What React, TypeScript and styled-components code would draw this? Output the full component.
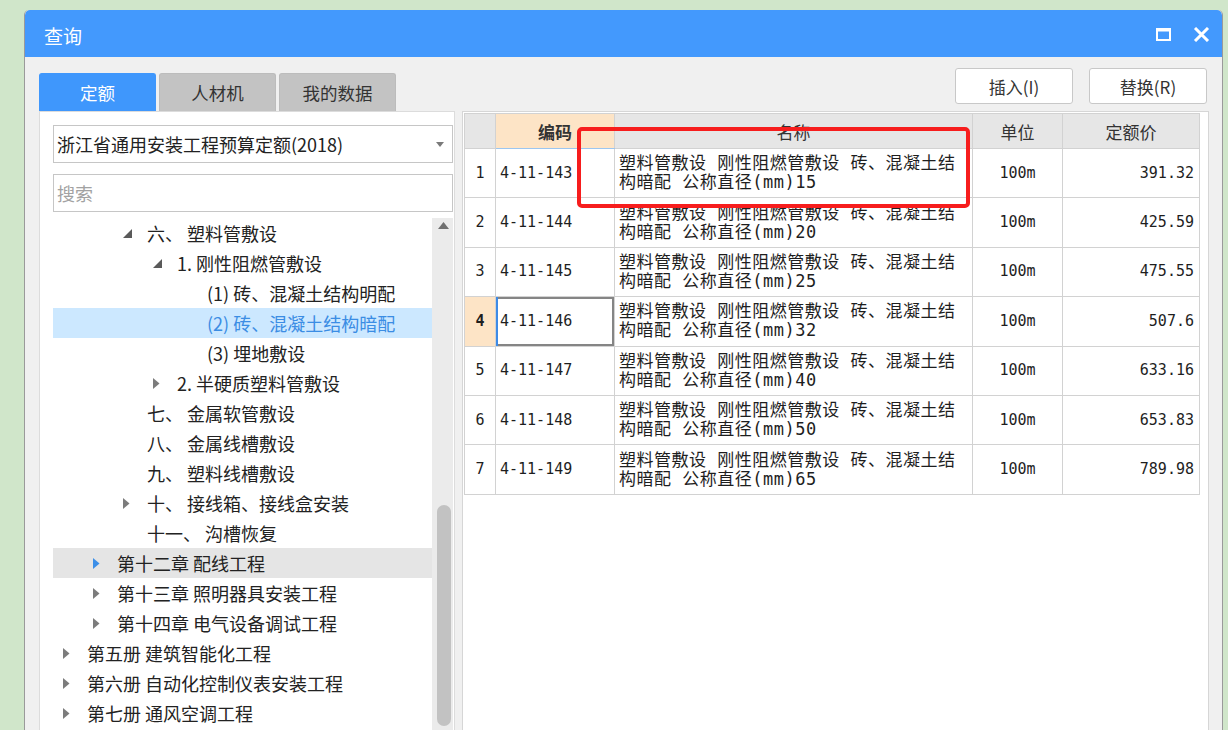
import React from "react";
import styled, { createGlobalStyle } from "styled-components";

const GlobalStyle = createGlobalStyle`
  html, body {
    margin: 0;
    padding: 0;
    height: 730px;
    overflow: hidden;
    background: #d0e6ca;
  }
  body {
    font-family: "Noto Sans CJK SC", "Noto Sans", sans-serif;
    color: #222;
  }
`;

const UI_FONT = `"Noto Sans CJK SC", "Noto Sans", sans-serif`;
const GRID_FONT = `"DejaVu Sans Mono", "Noto Sans CJK SC", monospace`;

const Page = styled.div`
  height: 730px;
  box-sizing: border-box;
  padding: 10px 0 0 24px;
  overflow: hidden;
`;

const Window = styled.div`
  width: 1199px;
  height: 760px;
  box-sizing: border-box;
  border-left: 1px solid #9a9a9a;
  border-right: 1px solid #9a9a9a;
  border-radius: 5px 5px 0 0;
  background: #f0f0f0;
  display: flex;
  flex-direction: column;
  overflow: hidden;
`;

const TitleBar = styled.div`
  height: 47px;
  flex: none;
  background: #4399fd;
  border-radius: 5px 5px 0 0;
  display: flex;
  align-items: center;
  padding: 0 12px 0 19px;
  color: #fff;
`;

const Title = styled.div`
  flex: 1;
  font-size: 19px;
  padding-top: 4px;
  font-family: ${UI_FONT};
`;

const Controls = styled.div`
  display: flex;
  align-items: center;
  gap: 22px;
  padding-top: 1px;
`;

const Body = styled.div`
  flex: 1;
  display: flex;
  flex-direction: column;
  padding: 11px 14px 0 14px;
  min-height: 0;
`;

const TopRow = styled.div`
  height: 43px;
  flex: none;
  display: flex;
  justify-content: space-between;
`;

const Tabs = styled.div`
  align-self: flex-end;
  display: flex;
  gap: 3px;
`;

const Tab = styled.div<{ $active?: boolean }>`
  width: 117px;
  height: 38px;
  box-sizing: border-box;
  border-radius: 3px 3px 0 0;
  display: flex;
  align-items: center;
  justify-content: center;
  font-size: 17.5px;
  background: ${(p) => (p.$active ? "#3f97fc" : "#c3c3c3")};
  color: ${(p) => (p.$active ? "#fff" : "#333")};
  border: 1px solid ${(p) => (p.$active ? "#3f97fc" : "#bcbcbc")};
  border-bottom: none;
`;

const Buttons = styled.div`
  display: flex;
  gap: 16px;
  margin-right: 1px;
  align-self: flex-start;
`;

const Button = styled.div`
  width: 118px;
  height: 36px;
  box-sizing: border-box;
  border: 1px solid #c8c8c8;
  border-radius: 3px;
  background: #fff;
  display: flex;
  align-items: center;
  justify-content: center;
  font-size: 17px;
  color: #333;
`;

const Main = styled.div`
  flex: 1;
  display: flex;
  gap: 7px;
  min-height: 0;
`;

const LeftPanel = styled.div`
  width: 416px;
  flex: none;
  box-sizing: border-box;
  background: #fff;
  border: 1px solid #dcdcdc;
  border-bottom: none;
  padding: 13px 1px 0 13px;
  display: flex;
  flex-direction: column;
  min-height: 0;
`;

const Select = styled.div`
  height: 38px;
  flex: none;
  box-sizing: border-box;
  border: 1px solid #c6c6c6;
  display: flex;
  align-items: center;
  padding: 0 8px 0 3px;
  font-size: 18px;
  color: #222;
`;

const SelectText = styled.span`
  flex: 1;
`;

const Search = styled.input`
  margin-top: 11px;
  height: 38px;
  flex: none;
  box-sizing: border-box;
  border: 1px solid #c6c6c6;
  outline: none;
  padding: 0 3px;
  font-size: 18px;
  font-family: ${UI_FONT};
  color: #222;
  &::placeholder {
    color: #a2a2a2;
  }
`;

const Tree = styled.div`
  margin-top: 6px;
  flex: 1;
  display: flex;
  min-height: 0;
`;

const TreeList = styled.div`
  flex: 1;
  overflow: hidden;
`;

const TreeRow = styled.div<{ $level: number; $selected?: boolean; $hot?: boolean }>`
  height: 30px;
  display: flex;
  align-items: center;
  padding-left: ${(p) => 10 + p.$level * 30}px;
  font-size: 18px;
  white-space: nowrap;
  background: ${(p) => (p.$selected ? "#cce8ff" : p.$hot ? "#e5e5e5" : "transparent")};
  color: ${(p) => (p.$selected ? "#3b8de4" : "#222")};
`;

const ArrowBox = styled.span`
  width: 24px;
  flex: none;
  display: flex;
  align-items: center;
`;

const ScrollTrack = styled.div`
  width: 21px;
  flex: none;
  background: #ebebeb;
  display: flex;
  flex-direction: column;
  align-items: center;
`;

const ScrollUp = styled.div`
  height: 11px;
  display: flex;
  align-items: flex-end;
  padding-left: 1px;
`;

const Thumb = styled.div`
  margin-top: 276px;
  width: 14px;
  height: 221px;
  border-radius: 7px;
  background: #c2c2c2;
  margin-left: 2px;
`;

const TablePanel = styled.div`
  flex: 1;
  position: relative;
  box-sizing: border-box;
  background: #fff;
  border: 1px solid #d6d6d6;
  border-bottom: none;
  padding: 1px 8px 0 1px;
`;

const Grid = styled.table`
  width: 735px;
  border-collapse: collapse;
  table-layout: fixed;
  font-family: ${GRID_FONT};
  color: #1e1e1e;
`;

const HeadCell = styled.th<{ $key?: boolean }>`
  height: 34px;
  padding: 0;
  border: 1px solid #d2d2d2;
  border-bottom: 1px solid ${(p) => (p.$key ? "#9cc6f0" : "#d2d2d2")};
  background: ${(p) => (p.$key ? "#fde4c6" : "#e6e6e6")};
  font-family: ${UI_FONT};
  font-size: 17px;
  font-weight: ${(p) => (p.$key ? 700 : 400)};
  color: #333;
  text-align: center;
`;

const Cell = styled.td<{
  $align?: "left" | "center" | "right";
  $current?: boolean;
  $focus?: boolean;
}>`
  height: 48.4px;
  padding: 0 ${(p) => (p.$align === "right" ? 5 : 4)}px 0 4px;
  border: 1px solid #d2d2d2;
  text-align: ${(p) => p.$align ?? "left"};
  font-size: 15px;
  line-height: 19px;
  vertical-align: middle;
  background: ${(p) => (p.$current ? "#fde4c6" : "#fff")};
  font-weight: ${(p) => (p.$current ? 700 : 400)};
  box-shadow: ${(p) =>
    p.$focus ? "inset 2px 0 0 #3d8ae6, inset 0 0 0 2px #858585" : "none"};
`;

const NameCell = styled(Cell)`
  font-size: 17px;
  letter-spacing: 0.5px;
  padding-right: 12px;
`;

const Annotation = styled.div`
  position: absolute;
  left: 114px;
  top: 15px;
  width: 393px;
  height: 81px;
  box-sizing: border-box;
  border: 4px solid #f71d1d;
  border-radius: 5px;
  pointer-events: none;
`;

const MaxIcon = () => (
  <svg width="15" height="13" viewBox="0 0 15 13">
    <rect x="1" y="1.5" width="13" height="10.5" fill="none" stroke="#fff" strokeWidth="2" />
    <rect x="0" y="0" width="15" height="3.5" fill="#fff" />
  </svg>
);

const CloseIcon = () => (
  <svg width="17" height="15" viewBox="0 0 17 15">
    <path d="M2 1 L15 14 M15 1 L2 14" stroke="#fff" strokeWidth="3" strokeLinecap="butt" />
  </svg>
);

const DropArrow = () => (
  <svg width="8" height="5" viewBox="0 0 8 5">
    <path d="M0 0 H8 L4 5 Z" fill="#7a7a7a" />
  </svg>
);

const Collapsed = ({ color }: { color: string }) => (
  <svg width="7" height="11" viewBox="0 0 7 11">
    <path d="M0 0 L6.5 5.5 L0 11 Z" fill={color} />
  </svg>
);

const Expanded = () => (
  <svg width="9" height="9" viewBox="0 0 9 9">
    <path d="M9 0 V9 H0 Z" fill="#5a5a5a" />
  </svg>
);

const UpArrow = () => (
  <svg width="11" height="7" viewBox="0 0 11 7">
    <path d="M0 7 L5.5 0 L11 7 Z" fill="#707070" />
  </svg>
);

type Node = {
  level: number;
  text: string;
  state?: "open" | "closed";
  selected?: boolean;
  hot?: boolean;
};

const nodes: Node[] = [
  { level: 2, text: "六、 塑料管敷设", state: "open" },
  { level: 3, text: "1. 刚性阻燃管敷设", state: "open" },
  { level: 4, text: "(1) 砖、混凝土结构明配" },
  { level: 4, text: "(2) 砖、混凝土结构暗配", selected: true },
  { level: 4, text: "(3) 埋地敷设" },
  { level: 3, text: "2. 半硬质塑料管敷设", state: "closed" },
  { level: 2, text: "七、 金属软管敷设" },
  { level: 2, text: "八、 金属线槽敷设" },
  { level: 2, text: "九、 塑料线槽敷设" },
  { level: 2, text: "十、 接线箱、接线盒安装", state: "closed" },
  { level: 2, text: "十一、 沟槽恢复" },
  { level: 1, text: "第十二章 配线工程", state: "closed", hot: true },
  { level: 1, text: "第十三章 照明器具安装工程", state: "closed" },
  { level: 1, text: "第十四章 电气设备调试工程", state: "closed" },
  { level: 0, text: "第五册 建筑智能化工程", state: "closed" },
  { level: 0, text: "第六册 自动化控制仪表安装工程", state: "closed" },
  { level: 0, text: "第七册 通风空调工程", state: "closed" },
];

const rows = [
  { code: "4-11-143", dia: "15", price: "391.32" },
  { code: "4-11-144", dia: "20", price: "425.59" },
  { code: "4-11-145", dia: "25", price: "475.55" },
  { code: "4-11-146", dia: "32", price: "507.6" },
  { code: "4-11-147", dia: "40", price: "633.16" },
  { code: "4-11-148", dia: "50", price: "653.83" },
  { code: "4-11-149", dia: "65", price: "789.98" },
];

export default function App() {
  return (
    <>
      <GlobalStyle />
      <Page>
        <Window>
          <TitleBar>
            <Title>查询</Title>
            <Controls>
              <MaxIcon />
              <CloseIcon />
            </Controls>
          </TitleBar>
          <Body>
            <TopRow>
              <Tabs>
                <Tab $active>定额</Tab>
                <Tab>人材机</Tab>
                <Tab>我的数据</Tab>
              </Tabs>
              <Buttons>
                <Button>插入(I)</Button>
                <Button>替换(R)</Button>
              </Buttons>
            </TopRow>
            <Main>
              <LeftPanel>
                <Select>
                  <SelectText>浙江省通用安装工程预算定额(2018)</SelectText>
                  <DropArrow />
                </Select>
                <Search placeholder="搜索" readOnly />
                <Tree>
                  <TreeList>
                    {nodes.map((n, i) => (
                      <TreeRow key={i} $level={n.level} $selected={n.selected} $hot={n.hot}>
                        <ArrowBox>
                          {n.state === "open" && <Expanded />}
                          {n.state === "closed" && (
                            <Collapsed color={n.hot ? "#3c8fe8" : "#7c7c7c"} />
                          )}
                        </ArrowBox>
                        {n.text}
                      </TreeRow>
                    ))}
                  </TreeList>
                  <ScrollTrack>
                    <ScrollUp>
                      <UpArrow />
                    </ScrollUp>
                    <Thumb />
                  </ScrollTrack>
                </Tree>
              </LeftPanel>
              <TablePanel>
                <Grid>
                  <colgroup>
                    <col style={{ width: 31 }} />
                    <col style={{ width: 119 }} />
                    <col style={{ width: 358 }} />
                    <col style={{ width: 90 }} />
                    <col style={{ width: 137 }} />
                  </colgroup>
                  <thead>
                    <tr>
                      <HeadCell />
                      <HeadCell $key>编码</HeadCell>
                      <HeadCell>名称</HeadCell>
                      <HeadCell>单位</HeadCell>
                      <HeadCell>定额价</HeadCell>
                    </tr>
                  </thead>
                  <tbody>
                    {rows.map((r, i) => (
                      <tr key={r.code}>
                        <Cell $align="center" $current={i === 3}>
                          {i + 1}
                        </Cell>
                        <Cell $focus={i === 3}>{r.code}</Cell>
                        <NameCell>
                          塑料管敷设 刚性阻燃管敷设 砖、混凝土结构暗配 公称直径(mm){r.dia}
                        </NameCell>
                        <Cell $align="center">100m</Cell>
                        <Cell $align="right">{r.price}</Cell>
                      </tr>
                    ))}
                  </tbody>
                </Grid>
                <Annotation />
              </TablePanel>
            </Main>
          </Body>
        </Window>
      </Page>
    </>
  );
}
